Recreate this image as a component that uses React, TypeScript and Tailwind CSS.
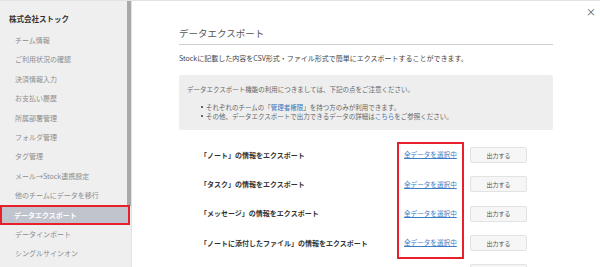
import React from "react";

const items = [
  "チーム情報",
  "ご利用状況の確認",
  "決済情報入力",
  "お支払い履歴",
  "所属部署管理",
  "フォルダ管理",
  "タグ管理",
  "メール→Stock連携設定",
  "他のチームにデータを移行",
  "データエクスポート",
  "データインポート",
  "シングルサインオン",
];

const rows = [
  "「ノート」の情報をエクスポート",
  "「タスク」の情報をエクスポート",
  "「メッセージ」の情報をエクスポート",
  "「ノートに添付したファイル」の情報をエクスポート",
  "",
];

export default function App() {
  return (
    <div
      className="relative flex h-[267px] w-[600px] overflow-hidden border-t border-[#e3e3e3] bg-white"
      style={{ fontFamily: '"Noto Sans CJK JP", "Noto Sans", sans-serif' }}
    >
      {/* Sidebar */}
      <div className="relative h-full w-[132px] shrink-0 border-r border-[#e2e2e2] bg-[#efefef] pt-[12px]">
        <div className="h-[12px] pl-[9px] text-[7.5px] font-bold leading-[12px] text-[#333]">
          株式会社ストック
        </div>
        <div className="mt-[6px]">
          {items.map((t, i) =>
            i === 9 ? (
              <div
                key={t}
                className="h-[19.4px] w-[128px] bg-[#c2c4cd] pl-[14px] text-[7px] font-bold leading-[19.4px] text-white"
              >
                {t}
              </div>
            ) : (
              <div
                key={t}
                className="h-[19.4px] pl-[15px] text-[7px] leading-[19.4px] text-[#8c8c8c]"
              >
                {t}
              </div>
            )
          )}
        </div>
        {/* scrollbar thumb */}
        <div className="absolute right-0 top-0 h-[205px] w-[4px] bg-[#a9a9a9]" />
        {/* annotation */}
        <div className="absolute left-0 top-[204px] h-[20px] w-[130px] border-2 border-[#e8202a]" />
      </div>

      {/* Main */}
      <div className="relative flex-1 pl-[47px] pt-[25px]">
        <div className="w-[374px]">
          <div className="border-b border-[#cfcfcf] pb-[4px] text-[9.5px] leading-[14px] text-[#555]">
            データエクスポート
          </div>
          <div className="mt-[8px] h-[10px] text-[7px] leading-[10px] text-[#444]">
            Stockに記載した内容をCSV形式・ファイル形式で簡単にエクスポートすることができます。
          </div>
          <div className="mt-[12px] h-[55px] rounded-[2px] bg-[#eeeeee] pl-[8px] pt-[9px] text-[6.5px] text-[#666]">
            <div className="leading-[10px]">
              データエクスポート機能の利用につきましては、下記の点をご注意ください。
            </div>
            <div className="mt-[8.5px] pl-[14px]">
              <div className="flex h-[9px] items-center leading-[9px]">
                <span className="mr-[3px] inline-block h-[2px] w-[2px] bg-[#666]" />
                それぞれのチームの「<span className="text-[#3b78bb]">管理者権限</span>」を持つ方のみが利用できます。
              </div>
              <div className="flex h-[9px] items-center leading-[9px]">
                <span className="mr-[3px] inline-block h-[2px] w-[2px] bg-[#666]" />
                その他、データエクスポートで出力できるデータの詳細は<span className="text-[#3b78bb]">こちら</span>をご参照ください。
              </div>
            </div>
          </div>
          <div className="mt-[10.5px]">
            {rows.map((r, i) => (
              <div key={i} className="flex h-[29.3px] items-center">
                <div className="w-[225px] pl-[21px] text-[7px] font-bold text-[#333]">{r}</div>
                <div className="w-[66px] text-[6.6px] text-[#3b7cc4] underline underline-offset-[1px]">
                  {r ? "全データを選択中" : ""}
                </div>
                <div className="flex h-[16px] w-[57px] items-center justify-center rounded-[2px] border border-[#e2e2e2] bg-[#f6f6f6] text-[6px] text-[#555]">
                  {r ? "出力する" : ""}
                </div>
              </div>
            ))}
          </div>
        </div>
        {/* annotation */}
        <div className="absolute left-[265px] top-[141px] h-[117px] w-[67px] border-2 border-[#e8202a]" />
        {/* close */}
        <div className="absolute right-[4px] top-[4px] text-[10px] leading-[14px] text-[#555]">×</div>
      </div>
    </div>
  );
}
